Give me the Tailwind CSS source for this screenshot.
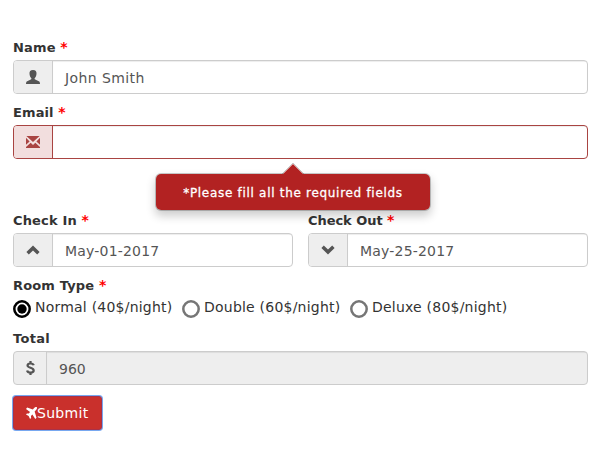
<!DOCTYPE html>
<html lang="en">
<head>
<meta charset="utf-8">
<title>Booking</title>
<script src="https://cdn.jsdelivr.net/npm/@tailwindcss/browser@4"></script>
</head>
<body class="bg-white font-['DejaVu_Sans',Verdana,sans-serif] text-sm text-[#333]">
<form class="w-[602px] h-[472px] pl-[13px] pr-[14px] pt-[38px] overflow-hidden">
  <div class="mb-[9px]">
    <label class="block h-5 leading-5 mb-[2px] text-[13px] tracking-[0.15px] font-bold"><span>Name</span> <span class="text-[#f00] text-sm leading-none">*</span></label>
    <div class="flex h-[34px] rounded border border-[#ccc] overflow-hidden">
      <span class="w-[39px] flex items-center justify-center bg-[#eee] border-r border-[#ccc]">
        <svg class="w-[14px] h-[14px]" viewBox="0 0 14 14" fill="#555"><path d="M7 0C4.300 0 3.300 1.600 3.500 3.800C3.600 5.600 4.200 7 5.200 8.100C5.600 8.700 5.500 9.300 4.800 9.600L1.200 11.200C.4 11.600 0 12.300 0 14H14C14 12.300 13.600 11.600 12.800 11.200L9.200 9.600C8.500 9.300 8.400 8.700 8.800 8.100C9.800 7 10.400 5.600 10.500 3.800C10.700 1.600 9.700 0 7 0Z"/></svg>
      </span>
      <span class="flex-1 px-3 leading-[35px] text-[#555] shadow-[inset_0_1px_1px_rgba(0,0,0,0.075)]"><span class="tracking-[0.4px]">John Smith</span></span>
    </div>
  </div>
  <div class="relative mb-[52px]">
    <label class="block h-5 leading-5 mb-[2px] text-[13px] tracking-[0.1px] font-bold"><span>Email</span> <span class="text-[#f00] text-sm leading-none">*</span></label>
    <div class="flex h-[34px] rounded border border-[#a94442] overflow-hidden">
      <span class="w-[39px] flex items-center justify-center bg-[#f2dede] border-r border-[#a94442]">
        <svg class="w-[14px] h-[12px]" viewBox="0 0 14 12" fill="#a94442"><path d="M.4 0H13.600L7 6ZM0 1.800L3.600 5.500L0 8.700ZM14 1.800L10.400 5.500L14 8.700ZM4.700 6.800L7 9L9.300 6.800L14 10.900V12H0V10.900Z"/></svg>
      </span>
      <span class="flex-1 shadow-[inset_0_1px_1px_rgba(0,0,0,0.075)]"></span>
    </div>
    <div class="absolute left-[142px] top-[70px] w-[276px] h-[38px] rounded-[6px] bg-[#b22222] border border-black/20 bg-clip-padding shadow-[0_5px_10px_rgba(0,0,0,0.2)] text-center text-white text-xs leading-[38px] whitespace-nowrap">
      <svg class="absolute left-[126px] -top-[11px] w-[22px] h-[12px]" viewBox="0 0 22 12"><path d="M0 12L11 1L22 12Z" fill="#b22222"/><path d="M0 11L11 0L22 11" fill="none" stroke="#000" stroke-opacity=".22"/></svg>
      <span class="tracking-[0.7px] [-webkit-text-stroke:0.3px_white]">*Please fill all the required fields</span>
    </div>
  </div>
  <div class="grid grid-cols-2 gap-[15px] mb-[9px]">
    <div>
      <label class="block h-5 leading-5 mb-[2px] text-[13px] tracking-[0.15px] font-bold"><span>Check In</span> <span class="text-[#f00] text-sm leading-none">*</span></label>
      <div class="flex h-[34px] rounded border border-[#ccc] overflow-hidden">
        <span class="w-[39px] flex items-center justify-center bg-[#eee] border-r border-[#ccc]">
          <svg class="w-[14px] h-[10px]" viewBox="0 0 14 10" fill="#555"><path d="M7 .5L13.600 7L11.200 9.500L7 5.500L2.800 9.500L.4 7Z"/></svg>
        </span>
        <span class="flex-1 px-3 leading-[35px] text-[#555] shadow-[inset_0_1px_1px_rgba(0,0,0,0.075)]"><span class="tracking-[0.2px]">May-01-2017</span></span>
      </div>
    </div>
    <div>
      <label class="block h-5 leading-5 mb-[2px] text-[13px] tracking-[-0.05px] font-bold"><span>Check Out</span> <span class="text-[#f00] text-sm leading-none">*</span></label>
      <div class="flex h-[34px] rounded border border-[#ccc] overflow-hidden">
        <span class="w-[39px] flex items-center justify-center bg-[#eee] border-r border-[#ccc]">
          <svg class="w-[14px] h-[10px]" viewBox="0 0 14 10" fill="#555"><path d="M7 9.500L13.600 3L11.200 .5L7 4.500L2.800 .5L.4 3Z"/></svg>
        </span>
        <span class="flex-1 px-3 leading-[35px] text-[#555] shadow-[inset_0_1px_1px_rgba(0,0,0,0.075)]"><span class="tracking-[0.2px]">May-25-2017</span></span>
      </div>
    </div>
  </div>
  <div class="mb-[12px]">
    <div class="h-5 leading-5 mb-[1px] text-[13px] tracking-[0.15px] font-bold"><span>Room Type</span> <span class="text-[#f00] text-sm leading-none">*</span></div>
    <div class="flex h-5 leading-5 tracking-[0.22px]">
      <label class="flex w-[169px] gap-1"><svg class="w-[18px] h-[18px] mt-[2.500px]" viewBox="0 0 18 18"><circle cx="9" cy="9" r="7.700" fill="#fff" stroke="#000" stroke-width="2.500"/><circle cx="9" cy="9" r="4.700"/></svg><span>Normal (40$/night)</span></label>
      <label class="flex w-[168px] gap-1"><svg class="w-[18px] h-[18px] mt-[2.500px]" viewBox="0 0 18 18"><circle cx="9" cy="9" r="7.700" fill="#fff" stroke="#767676" stroke-width="2.500"/></svg><span>Double (60$/night)</span></label>
      <label class="flex gap-1"><svg class="w-[18px] h-[18px] mt-[2.500px]" viewBox="0 0 18 18"><circle cx="9" cy="9" r="7.700" fill="#fff" stroke="#767676" stroke-width="2.500"/></svg><span>Deluxe (80$/night)</span></label>
    </div>
  </div>
  <div class="mb-[11px]">
    <label class="block h-5 leading-5 mb-[2px] text-[13px] tracking-[0.3px] font-bold"><span>Total</span></label>
    <div class="flex h-[34px] rounded border border-[#ccc] overflow-hidden bg-[#eee]">
      <span class="w-[33px] flex items-center justify-center border-r border-[#ccc]">
        <svg class="w-[9px] h-[14px]" viewBox="0 0 8 14" preserveAspectRatio="none" fill="none" stroke="#555" stroke-width="2"><path d="M6.800 4.300C6.300 2 1.400 1.900 1.400 4.500C1.400 7.200 6.800 6.300 6.800 9.400C6.800 12.300 1.500 12.200 1 9.500M4 0V2.500M4 11.500V14"/></svg>
      </span>
      <span class="flex-1 px-3 leading-[35px] text-[#555] shadow-[inset_0_1px_1px_rgba(0,0,0,0.075)]">960</span>
    </div>
  </div>
  <button type="button" class="flex items-center w-[89px] h-[34px] pl-3 rounded-[3px] border border-[#a8324a] bg-[#c9302c] text-white shadow-[0_0_0_1px_#78a8f0]">
    <svg class="w-[11px] h-[12px]" viewBox="0 0 12 12" fill="#fff" preserveAspectRatio="none"><path d="M11.800.2C11 -.3 9.900.1 9.200.8L7.400 2.600L1.300.5L0 1.900L4.400 5L3 6.600L1 6.400L0 7.500L2.900 9.100L4.400 12L5.600 11L5.400 9L7 7.600L10.100 12L11.500 10.700L9.400 4.600L11.200 2.800C11.900 2.100 12.300 1 11.800.2Z"/></svg><span class="tracking-[0.3px]">Submit</span>
  </button>
</form>
</body>
</html>
